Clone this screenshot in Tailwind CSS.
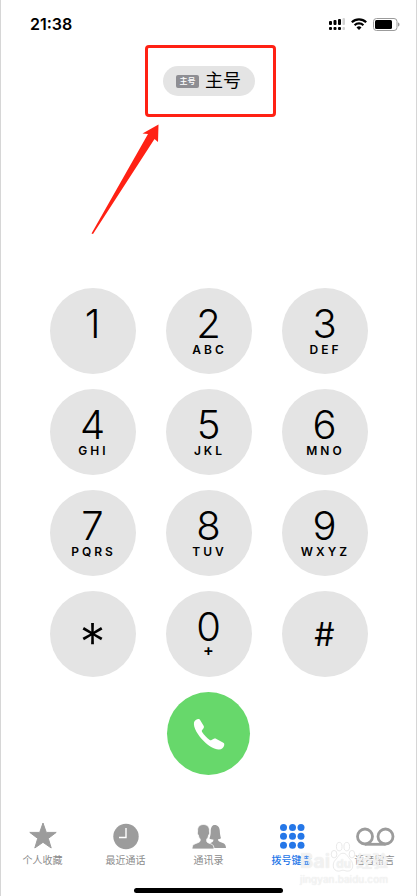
<!DOCTYPE html>
<html lang="zh-CN">
<head>
    <meta charset="UTF-8">
    <meta name="viewport" content="width=device-width, initial-scale=1.0">
    <title>拨号键盘</title>
    <script src="https://cdn.jsdelivr.net/npm/@tailwindcss/browser@4"></script>
</head>
<body class="bg-white text-black font-['Inter','Noto_Sans_CJK_SC',sans-serif]">
    <div class="relative flex flex-col min-h-screen border-x border-[#d6d6d6] overflow-hidden">
        <!-- status bar -->
        <header class="flex items-center justify-between h-12 pl-[29px] pr-4">
            <span class="text-base leading-6 font-semibold">21:38</span>
            <div class="flex items-center gap-[6px]">
                <svg class="w-4 h-3" viewBox="0 0 16 12" aria-hidden="true">
                    <g fill="#000">
                        <rect x="0" y="3" width="3" height="4" rx="1" />
                        <rect x="4.500" y="2" width="3" height="5" rx="1" />
                        <rect x="9" y="1" width="3" height="6" rx="1" />
                        <rect x="0" y="9" width="3" height="3" rx="1" />
                        <rect x="4.500" y="9" width="3" height="3" rx="1" />
                        <rect x="9" y="9" width="3" height="3" rx="1" />
                    </g>
                    <g fill="#d2d2d2">
                        <rect x="13.500" y="0" width="2.500" height="7" rx="1" />
                        <rect x="13.500" y="9" width="2.500" height="3" rx="1" />
                    </g>
                </svg>
                <svg class="w-4 h-3" viewBox="0 0 16 12" aria-hidden="true">
                    <g fill="none" stroke="#000" stroke-width="2.200">
                        <path d="M.8 4.300a10.400 10.400 0 0 1 14.400 0" />
                        <path d="M3.600 7.200a6.300 6.300 0 0 1 8.800 0" />
                    </g>
                    <path d="M8 12 5.500 9.400a3.600 3.600 0 0 1 5 0z" />
                </svg>
                <svg class="w-[27px] h-[13px]" viewBox="0 0 27 13" aria-hidden="true">
                    <rect x=".5" y=".5" width="23.500" height="12" rx="3" fill="#fff" stroke="#9b9b9b" />
                    <rect x="2" y="2" width="17" height="9" rx="1.500" />
                    <path d="M25 4.500c2 .6 2 3.400 0 4z" fill="#9b9b9b" />
                </svg>
            </div>
        </header>

        <!-- line picker -->
        <div class="flex justify-center mt-[18px]">
            <div class="relative">
                <button type="button" class="flex items-center justify-center gap-[6px] w-[92px] h-[30px] rounded-full bg-[#e4e4e4]">
                    <span class="flex items-center justify-center w-[23px] h-[13px] rounded-[2px] bg-[#8e8e93] text-white text-[8px] leading-none font-medium">主号</span>
                    <span class="text-lg leading-[30px]">主号</span>
                </button>
                <div class="absolute -top-[21px] -left-[18px] w-[131px] h-[72px] border-3 border-[#ff2114] rounded pointer-events-none"></div>
                <svg class="absolute top-[58px] -left-[72px] w-[70px] h-[111px] pointer-events-none" viewBox="0 0 70 111" fill="#ff2114" aria-hidden="true">
                    <path d="M67.500.5 51.500 9.500 57 10 .5 109.500 2 110 63.500 15 67 18z" />
                </svg>
            </div>
        </div>

        <!-- keypad -->
        <main class="flex flex-col items-center mt-48">
            <div class="grid grid-cols-3 gap-x-[30px] gap-y-[15px]">
                <button type="button" class="flex flex-col items-center size-[86px] pt-4 rounded-full bg-[#e4e4e4]">
                    <span class="text-[40px] leading-10 font-light">1</span>
                </button>
                <button type="button" class="flex flex-col items-center size-[86px] pt-4 rounded-full bg-[#e4e4e4]">
                    <span class="text-[40px] leading-10 font-light">2</span>
                    <span class="pl-[2px] text-xs leading-3 font-semibold tracking-[3px]">ABC</span>
                </button>
                <button type="button" class="flex flex-col items-center size-[86px] pt-4 rounded-full bg-[#e4e4e4]">
                    <span class="text-[40px] leading-10 font-light">3</span>
                    <span class="pl-[2px] text-xs leading-3 font-semibold tracking-[3px]">DEF</span>
                </button>
                <button type="button" class="flex flex-col items-center size-[86px] pt-4 rounded-full bg-[#e4e4e4]">
                    <span class="text-[40px] leading-10 font-light">4</span>
                    <span class="pl-[2px] text-xs leading-3 font-semibold tracking-[3px]">GHI</span>
                </button>
                <button type="button" class="flex flex-col items-center size-[86px] pt-4 rounded-full bg-[#e4e4e4]">
                    <span class="text-[40px] leading-10 font-light">5</span>
                    <span class="pl-[2px] text-xs leading-3 font-semibold tracking-[3px]">JKL</span>
                </button>
                <button type="button" class="flex flex-col items-center size-[86px] pt-4 rounded-full bg-[#e4e4e4]">
                    <span class="text-[40px] leading-10 font-light">6</span>
                    <span class="pl-[2px] text-xs leading-3 font-semibold tracking-[3px]">MNO</span>
                </button>
                <button type="button" class="flex flex-col items-center size-[86px] pt-4 rounded-full bg-[#e4e4e4]">
                    <span class="text-[40px] leading-10 font-light">7</span>
                    <span class="pl-[2px] text-xs leading-3 font-semibold tracking-[3px]">PQRS</span>
                </button>
                <button type="button" class="flex flex-col items-center size-[86px] pt-4 rounded-full bg-[#e4e4e4]">
                    <span class="text-[40px] leading-10 font-light">8</span>
                    <span class="pl-[2px] text-xs leading-3 font-semibold tracking-[3px]">TUV</span>
                </button>
                <button type="button" class="flex flex-col items-center size-[86px] pt-4 rounded-full bg-[#e4e4e4]">
                    <span class="text-[40px] leading-10 font-light">9</span>
                    <span class="pl-[2px] text-xs leading-3 font-semibold tracking-[3px]">WXYZ</span>
                </button>
                <button type="button" class="flex flex-col items-center size-[86px] pt-6 rounded-full bg-[#e4e4e4]">
                    <span class="text-[52px] leading-[56px] font-light">*</span>
                </button>
                <button type="button" class="flex flex-col items-center size-[86px] pt-4 rounded-full bg-[#e4e4e4]">
                    <span class="text-[40px] leading-10 font-light">0</span>
                    <span class="text-base leading-[6px] font-semibold">+</span>
                </button>
                <button type="button" class="flex flex-col items-center size-[86px] pt-6 rounded-full bg-[#e4e4e4]">
                    <span class="text-[32px] leading-10">#</span>
                </button>
            </div>
            <button type="button" aria-label="拨打" class="flex items-center justify-center size-[83px] mt-[15px] rounded-full bg-[#67d86b]">
                <svg class="size-8" viewBox="0 0 32 32" fill="#fff" aria-hidden="true">
                    <path d="M1 4.500C1.600 2.300 4 .8 5.800 1c.8.1 1.200.8 1.600 1.500l3.200 5.300c.6 1 .4 1.800-.2 2.600L9 12.200c-.4.6-.3 1.100.1 1.700 2 2.900 4.600 5.600 7.600 8 .6.500 1.200.6 1.800.2l2.300-1.300c.9-.5 1.700-.5 2.600.1l6.500 3.700c1.200.7 1.600 1.300 1.300 2.600-.6 2.400-2.300 4.100-5.200 4.300-4.500.2-10.500-3.400-15.800-8.900C5 17.200.1 9.500 1 4.500z" />
                </svg>
            </button>
        </main>

        <!-- tab bar -->
        <nav class="grid grid-cols-5 mt-auto pb-[22px] text-[10px] leading-3 text-[#8b8b8b]">
            <a href="#" class="flex flex-col items-center gap-1">
                <svg class="size-7" viewBox="0 0 28 28" fill="#9c9c9c" stroke="#9c9c9c" stroke-linejoin="round" aria-hidden="true">
                    <path d="M14 1 17.300 10.400H27.200L19.300 16.400 22.200 26 14 20.300 5.800 26 8.700 16.400.8 10.400H10.700z" />
                </svg>
                <span>个人收藏</span>
            </a>
            <a href="#" class="flex flex-col items-center gap-1">
                <svg class="size-7" viewBox="0 0 28 28" fill="none" aria-hidden="true">
                    <circle cx="14" cy="14.500" r="12.700" fill="#9c9c9c" />
                    <path d="M14 6v9.500H7" stroke="#fff" stroke-width="1.400" />
                </svg>
                <span>最近通话</span>
            </a>
            <a href="#" class="flex flex-col items-center gap-1">
                <svg class="w-9 h-7" viewBox="0 0 36 28" fill="#9c9c9c" aria-hidden="true">
                    <path d="M23.500 3c3.600 0 5.200 2.600 5.300 6 .1 2.700.5 5.200 1.200 7.200-.8.600-2 1-3 1.100.1 1.400.6 2.100 2.200 2.700l3.300 1.300c1.600.6 2.300 2.200 2.500 4.700H17c0-3 1-4.300 2.600-5l1.500-.7c1-.5 1.300-1.200 1.300-2.700-1.400-.1-3-.5-4-1.100 1-2.300 1.300-4.600 1.300-7.200 0-3.700 1.500-6.300 3.800-6.300z" />
                    <path d="M12.500 2.500c4 0 6.200 2.600 5.900 6.500 0 .8.300 1.300.2 2.200-.1.800-.5 1.300-.9 1.800-.3 1.800-.9 3.200-2 4.300v1.600c0 1 .7 1.600 1.900 2.100l2.400.9c2.300.8 3 2.500 3 5.100H1c.1-3 .8-4.400 3-5.200l3.300-1.300c1.300-.5 1.900-1.200 1.900-2.300v-1c-1.100-1.100-1.700-2.500-1.900-4.200-.5-.4-.8-.9-.9-1.700-.1-.9.200-1.500.2-2.300-.3-4 1.800-6.500 5.900-6.500z" stroke="#fff" stroke-width=".8" />
                </svg>
                <span>通讯录</span>
            </a>
            <a href="#" class="flex flex-col items-center gap-1 text-[#2577e8] font-medium">
                <svg class="size-7" viewBox="0 0 28 28" fill="#2577e8" aria-hidden="true">
                    <circle cx="5.500" cy="5.500" r="3.500" />
                    <circle cx="14.500" cy="5.500" r="3.500" />
                    <circle cx="23" cy="5.500" r="3.500" />
                    <circle cx="5.500" cy="14.300" r="3.500" />
                    <circle cx="14.500" cy="14.300" r="3.500" />
                    <circle cx="23" cy="14.300" r="3.500" />
                    <circle cx="5.500" cy="23.200" r="3.500" />
                    <circle cx="14.500" cy="23.200" r="3.500" />
                    <circle cx="23" cy="23.200" r="3.500" />
                </svg>
                <span>拨号键盘</span>
            </a>
            <a href="#" class="flex flex-col items-center gap-1">
                <svg class="w-10 h-7" viewBox="0 0 40 28" fill="none" stroke="#9c9c9c" stroke-width="2.800" aria-hidden="true">
                    <circle cx="10" cy="14.500" r="7.500" />
                    <circle cx="30.500" cy="14.500" r="7.500" />
                    <path d="M10 22.300h20.500" />
                </svg>
                <span>语音留言</span>
            </a>
        </nav>
        <div class="w-[149px] h-[5px] mb-[3px] mx-auto rounded-full bg-black"></div>

        <!-- watermark -->
        <div class="absolute right-0 bottom-[11px] w-[116px] text-white/60 pointer-events-none [text-shadow:0_0_1px_#ddd]">
            <div class="flex items-end h-8 text-xl leading-6 font-bold">
                <span>Bai</span>
                <div class="relative w-[26px] h-8">
                    <svg class="w-[26px] h-8" viewBox="0 0 26 34" fill="#fff" fill-opacity=".6" stroke="#e2e2e2" stroke-width=".8" aria-hidden="true">
                        <ellipse cx="3.500" cy="14" rx="3" ry="4" />
                        <ellipse cx="9" cy="6" rx="3" ry="4.500" />
                        <ellipse cx="17" cy="6" rx="3" ry="4.500" />
                        <ellipse cx="22.500" cy="14" rx="3" ry="4" />
                        <path d="M13 13c4 0 5 4 8 7 4 4 3 12-3 12-3 0-3-1-5-1s-2 1-5 1c-6 0-7-8-3-12 3-3 4-7 8-7z" />
                    </svg>
                    <span class="absolute left-[6px] top-[17px] text-xs leading-3">du</span>
                </div>
                <span class="text-base leading-6">经验</span>
            </div>
            <div class="text-[10px] leading-3 font-medium">jingyan.baidu.com</div>
        </div>
    </div>
</body>
</html>
